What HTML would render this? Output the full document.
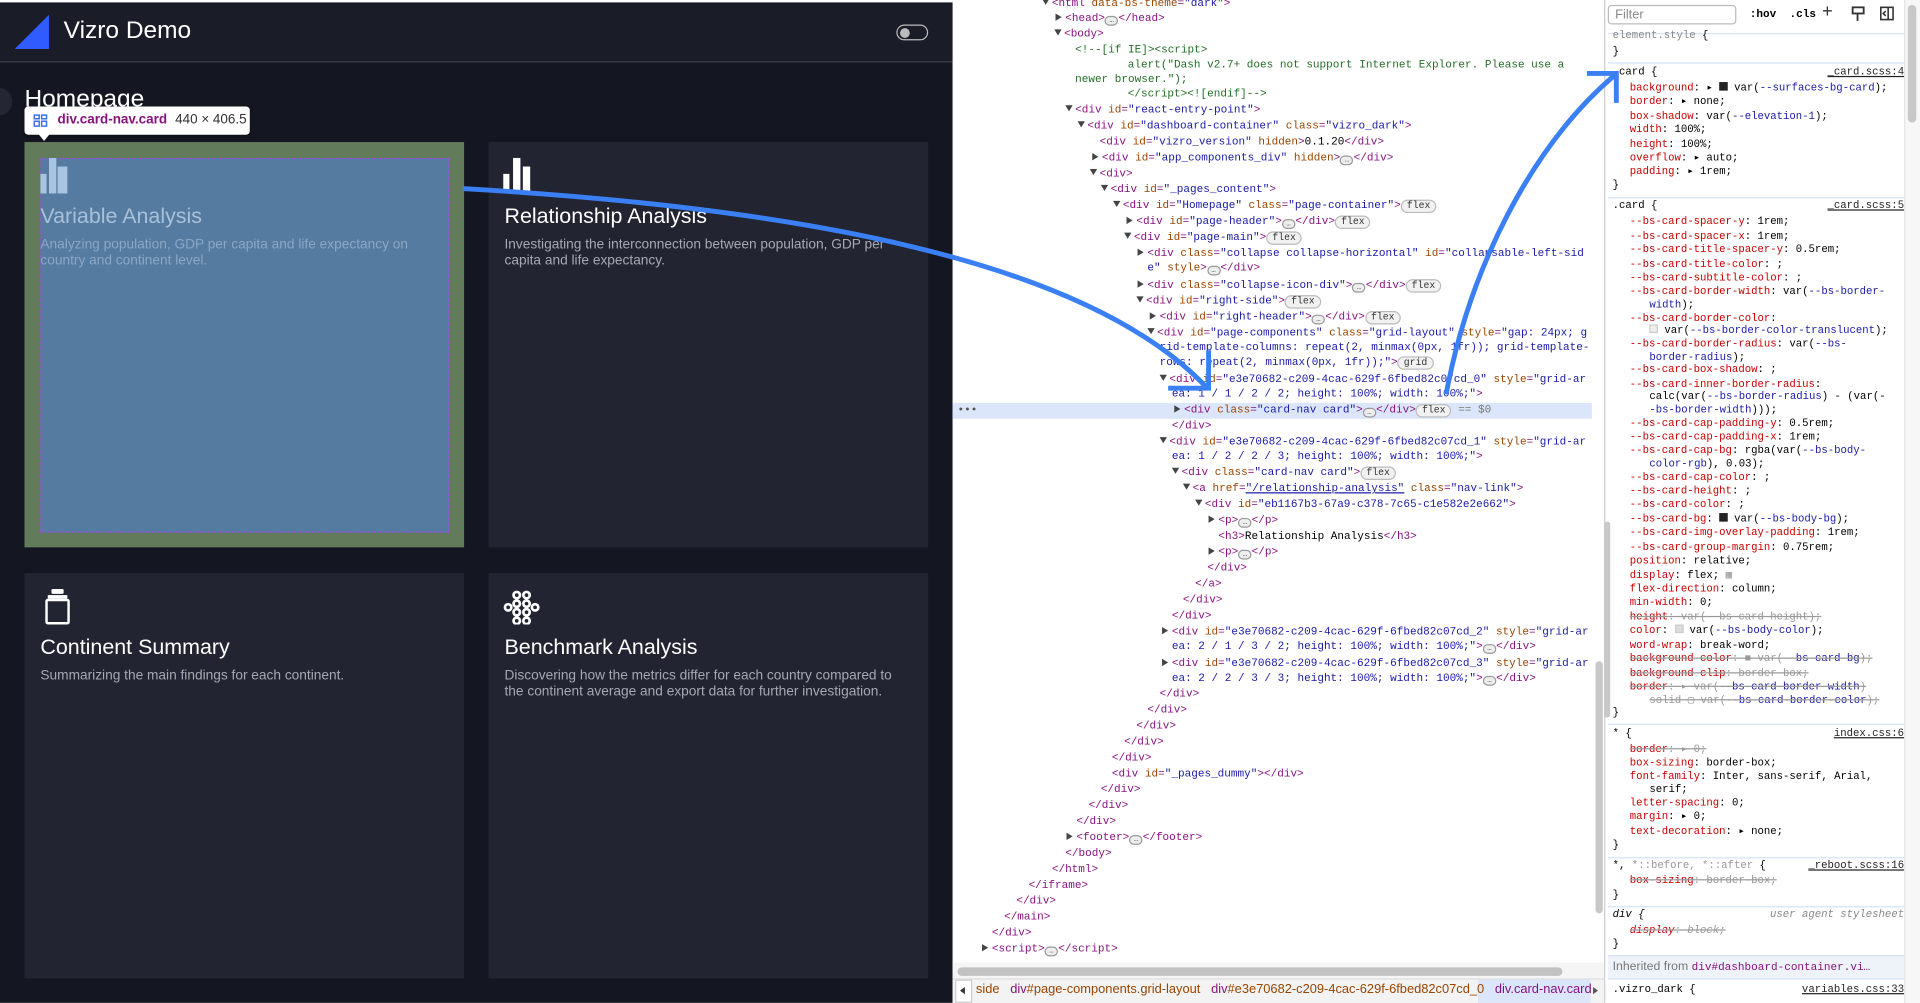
<!DOCTYPE html>
<html><head><meta charset="utf-8">
<style>
*{margin:0;padding:0;box-sizing:border-box}
html,body{width:1920px;height:1003px;overflow:hidden;background:#fff}
#w{position:absolute;left:0;top:0;width:1568px;height:819px;transform:scale(1.22449);transform-origin:0 0;font-family:"Liberation Sans",sans-serif}
.a{position:absolute;white-space:pre}
#left{position:absolute;left:0;top:0;width:778px;height:819px;background:#141721}
#hdr{position:absolute;left:0;top:2px;width:778px;height:49px;background:#1a1c27;border-bottom:1px solid #3a3d4a}
.card{position:absolute;width:359px;height:331px;background:#222432}
.ttl{position:absolute;left:13px;font-size:17.5px;color:#fff}
.dsc{position:absolute;left:13px;width:330px;font-size:11.2px;line-height:13px;color:#a6a8b1}
.m{font-family:"Liberation Mono",monospace;font-size:9px;color:#881280}
.t{color:#881280}.n{color:#994500}.v{color:#1a1aa6}.c{color:#236e25}.k{color:#000}
.s{font-family:"Liberation Mono",monospace;font-size:8.7px;color:#000}
.p{color:#c80000}.b{color:#1a1aa6}
.tri{display:inline-block;width:0;height:0;border-left:5px solid #444;border-top:3px solid transparent;border-bottom:3px solid transparent;margin-right:3px}
.trd{display:inline-block;width:0;height:0;border-top:5px solid #444;border-left:3px solid transparent;border-right:3px solid transparent;margin-right:2px;vertical-align:1px}
.pill{display:inline-block;border:1px solid #bbb;border-radius:6px;font-size:8px;color:#333;padding:0 4px;line-height:9px;background:#f1f1f1}
.dots{display:inline-block;width:11px;height:8px;border:1px solid #999;border-radius:4px;background:#eee;vertical-align:-1px;font-size:6px;line-height:5px;text-align:center;color:#333}
.sep{position:absolute;left:1313px;width:242px;height:1px;background:#d6e3f7}
.fn{position:absolute;right:13px;text-decoration:underline;color:#222}
.st{text-decoration:line-through;color:#999}
</style></head><body><div id="w">

<div id="left">
 <div style="position:absolute;left:0;top:0;width:778px;height:2px;background:#fff"></div>
 <div id="hdr">
  <svg class="a" style="left:12px;top:10px" width="28" height="28"><polygon points="28,0 28,28 0,28" fill="#2f5bff"/></svg>
  <div class="a" style="left:52px;top:12px;font-size:20px;color:#fff">Vizro Demo</div>
  <div class="a" style="left:732px;top:18px;width:26px;height:13px;border:1.5px solid #bbb;border-radius:7px"></div>
  <div class="a" style="left:735px;top:20.5px;width:8px;height:8px;border-radius:50%;background:#bbb"></div>
 </div>
 <div class="a" style="left:-10px;top:72px;width:20px;height:22px;border-radius:50%;background:#242733"></div>
 <div class="a" style="left:20px;top:70px;font-size:20px;color:#fff">Homepage</div>

 <div class="card" style="left:20px;top:116px;background:#627b5a">
  <div class="a" style="left:13px;top:13px;width:334px;height:306px;background:#557ba0;border:1px dashed #9b4fe0"></div>
  <div class="a" style="left:13px;top:26px;width:5px;height:16px;background:#a9c4e0"></div>
  <div class="a" style="left:20px;top:13px;width:6px;height:29px;background:#a9c4e0"></div>
  <div class="a" style="left:27px;top:20px;width:8px;height:22px;background:#a9c4e0"></div>
  <div class="ttl" style="top:50px;color:#a9c0d9">Variable Analysis</div>
  <div class="dsc" style="top:78px;color:#8aa7c6">Analyzing population, GDP per capita and life expectancy on country and continent level.</div>
 </div>
 <div class="card" style="left:399px;top:116px">
  <div class="a" style="left:12px;top:26px;width:5px;height:16px;background:#fff"></div>
  <div class="a" style="left:20px;top:13px;width:6px;height:29px;background:#fff"></div>
  <div class="a" style="left:28px;top:20px;width:6px;height:22px;background:#fff"></div>
  <div class="ttl" style="top:50px">Relationship Analysis</div>
  <div class="dsc" style="top:78px">Investigating the interconnection between population, GDP per capita and life expectancy.</div>
 </div>
 <div class="card" style="left:20px;top:468px">
  <div class="a" style="left:22px;top:13px;width:10px;height:4px;background:#fff;border-radius:1px"></div>
  <div class="a" style="left:19px;top:18px;width:16px;height:3px;background:#fff"></div>
  <div class="a" style="left:17px;top:21px;width:20px;height:21px;border:2.5px solid #fff;border-radius:2px"></div>
  <div class="ttl" style="top:50px">Continent Summary</div>
  <div class="dsc" style="top:78px">Summarizing the main findings for each continent.</div>
 </div>
 <div class="card" style="left:399px;top:468px">
  <svg class="a" style="left:12px;top:14px" width="30" height="28" fill="none" stroke="#fff" stroke-width="2.2">
   <circle cx="11" cy="4" r="2.6"/><circle cx="19" cy="4" r="2.6"/>
   <circle cx="4" cy="14" r="2.6"/><circle cx="11" cy="11" r="2.6"/><circle cx="19" cy="11" r="2.6"/><circle cx="26" cy="14" r="2.6"/>
   <circle cx="11" cy="18" r="2.6"/><circle cx="19" cy="18" r="2.6"/>
   <circle cx="11" cy="25" r="2.6"/><circle cx="19" cy="25" r="2.6"/>
  </svg>
  <div class="ttl" style="top:50px">Benchmark Analysis</div>
  <div class="dsc" style="top:78px">Discovering how the metrics differ for each country compared to the continent average and export data for further investigation.</div>
 </div>

 <div class="a" style="left:20px;top:87px;width:184px;height:23px;background:#fff;border-radius:3px;box-shadow:0 1px 3px rgba(0,0,0,.4)"></div>
 <div class="a" style="left:31px;top:109px;width:0;height:0;border-left:5px solid transparent;border-right:5px solid transparent;border-top:6px solid #fff"></div>
 <svg class="a" style="left:27px;top:93px" width="12" height="11" fill="none" stroke="#3a6fe0" stroke-width="1.2"><rect x="1" y="1" width="4" height="3"/><rect x="7" y="1" width="4" height="3"/><rect x="1" y="6" width="4" height="4"/><rect x="7" y="6" width="4" height="4"/></svg>
 <div class="a" style="left:47px;top:92px;font-size:11px;font-weight:bold;color:#881280">div.card-nav.card</div>
 <div class="a" style="left:143px;top:92px;font-size:11px;color:#333">440 × 406.5</div>
</div>

<!-- elements panel -->
<div class="a" style="left:778px;top:0;width:532px;height:819px;background:#fff"></div>
<div class="a" style="left:778px;top:329px;width:522px;height:13px;background:#dbe6fb"></div>
<div class="a m" style="left:782px;top:330px;color:#555">•••</div>
<div class="a m" style="left:851px;top:-2px"><span class="trd"></span>&lt;html <span class="n">data-bs-theme</span>=<span class="v">"dark"</span>&gt;</div>
<div class="a m" style="left:862px;top:10px"><span class="tri"></span>&lt;head&gt;<span class="dots">…</span>&lt;/head&gt;</div>
<div class="a m" style="left:861px;top:23px"><span class="trd"></span>&lt;body&gt;</div>
<div class="a m c" style="left:878px;top:36px">&lt;!--[if IE]&gt;&lt;script&gt;</div>
<div class="a m c" style="left:921px;top:48px">alert("Dash v2.7+ does not support Internet Explorer. Please use a</div>
<div class="a m c" style="left:878px;top:60px">newer browser.");</div>
<div class="a m c" style="left:921px;top:72px">&lt;/script&gt;&lt;![endif]--&gt;</div>
<div class="a m" style="left:870px;top:85px"><span class="trd"></span>&lt;div <span class="n">id</span>=<span class="v">"react-entry-point"</span>&gt;</div>
<div class="a m" style="left:880px;top:98px"><span class="trd"></span>&lt;div <span class="n">id</span>=<span class="v">"dashboard-container"</span> <span class="n">class</span>=<span class="v">"vizro_dark"</span>&gt;</div>
<div class="a m" style="left:898px;top:111px">&lt;div <span class="n">id</span>=<span class="v">"vizro_version"</span> <span class="n">hidden</span>&gt;<span class="k">0.1.20</span>&lt;/div&gt;</div>
<div class="a m" style="left:892px;top:124px"><span class="tri"></span>&lt;div <span class="n">id</span>=<span class="v">"app_components_div"</span> <span class="n">hidden</span>&gt;<span class="dots">…</span>&lt;/div&gt;</div>
<div class="a m" style="left:890px;top:137px"><span class="trd"></span>&lt;div&gt;</div>
<div class="a m" style="left:899px;top:150px"><span class="trd"></span>&lt;div <span class="n">id</span>=<span class="v">"_pages_content"</span>&gt;</div>
<div class="a m" style="left:909px;top:163px"><span class="trd"></span>&lt;div <span class="n">id</span>=<span class="v">"Homepage"</span> <span class="n">class</span>=<span class="v">"page-container"</span>&gt;<span class="pill">flex</span></div>
<div class="a m" style="left:920px;top:176px"><span class="tri"></span>&lt;div <span class="n">id</span>=<span class="v">"page-header"</span>&gt;<span class="dots">…</span>&lt;/div&gt;<span class="pill">flex</span></div>
<div class="a m" style="left:918px;top:189px"><span class="trd"></span>&lt;div <span class="n">id</span>=<span class="v">"page-main"</span>&gt;<span class="pill">flex</span></div>
<div class="a m" style="left:929px;top:202px"><span class="tri"></span>&lt;div <span class="n">class</span>=<span class="v">"collapse collapse-horizontal"</span> <span class="n">id</span>=<span class="v">"collapsable-left-sid</span></div>
<div class="a m" style="left:937px;top:214px"><span class="v">e"</span> <span class="n">style</span>&gt;<span class="dots">…</span>&lt;/div&gt;</div>
<div class="a m" style="left:929px;top:228px"><span class="tri"></span>&lt;div <span class="n">class</span>=<span class="v">"collapse-icon-div"</span>&gt;<span class="dots">…</span>&lt;/div&gt;<span class="pill">flex</span></div>
<div class="a m" style="left:928px;top:241px"><span class="trd"></span>&lt;div <span class="n">id</span>=<span class="v">"right-side"</span>&gt;<span class="pill">flex</span></div>
<div class="a m" style="left:939px;top:254px"><span class="tri"></span>&lt;div <span class="n">id</span>=<span class="v">"right-header"</span>&gt;<span class="dots">…</span>&lt;/div&gt;<span class="pill">flex</span></div>
<div class="a m" style="left:937px;top:267px"><span class="trd"></span>&lt;div <span class="n">id</span>=<span class="v">"page-components"</span> <span class="n">class</span>=<span class="v">"grid-layout"</span> <span class="n">style</span>=<span class="v">"gap: 24px; g</span></div>
<div class="a m v" style="left:947px;top:279px">rid-template-columns: repeat(2, minmax(0px, 1fr)); grid-template-</div>
<div class="a m" style="left:947px;top:291px"><span class="v">rows: repeat(2, minmax(0px, 1fr));"</span>&gt;<span class="pill">grid</span></div>
<div class="a m" style="left:947px;top:305px"><span class="trd"></span>&lt;div <span class="n">id</span>=<span class="v">"e3e70682-c209-4cac-629f-6fbed82c07cd_0"</span> <span class="n">style</span>=<span class="v">"grid-ar</span></div>
<div class="a m v" style="left:957px;top:317px">ea: 1 / 1 / 2 / 2; height: 100%; width: 100%;"<span class="t">&gt;</span></div>
<div class="a m" style="left:959px;top:330px"><span class="tri"></span>&lt;div <span class="n">class</span>=<span class="v">"card-nav card"</span>&gt;<span class="dots">…</span>&lt;/div&gt;<span class="pill">flex</span> <span style="color:#777">== $0</span></div>
<div class="a m" style="left:957px;top:343px">&lt;/div&gt;</div>
<div class="a m" style="left:947px;top:356px"><span class="trd"></span>&lt;div <span class="n">id</span>=<span class="v">"e3e70682-c209-4cac-629f-6fbed82c07cd_1"</span> <span class="n">style</span>=<span class="v">"grid-ar</span></div>
<div class="a m v" style="left:957px;top:368px">ea: 1 / 2 / 2 / 3; height: 100%; width: 100%;"<span class="t">&gt;</span></div>
<div class="a m" style="left:957px;top:381px"><span class="trd"></span>&lt;div <span class="n">class</span>=<span class="v">"card-nav card"</span>&gt;<span class="pill">flex</span></div>
<div class="a m" style="left:966px;top:394px"><span class="trd"></span>&lt;a <span class="n">href</span>=<span class="v" style="text-decoration:underline;color:#1a1aa6">"/relationship-analysis"</span> <span class="n">class</span>=<span class="v">"nav-link"</span>&gt;</div>
<div class="a m" style="left:976px;top:407px"><span class="trd"></span>&lt;div <span class="n">id</span>=<span class="v">"eb1167b3-67a9-c378-7c65-c1e582e2e662"</span>&gt;</div>
<div class="a m" style="left:987px;top:420px"><span class="tri"></span>&lt;p&gt;<span class="dots">…</span>&lt;/p&gt;</div>
<div class="a m" style="left:995px;top:433px">&lt;h3&gt;<span class="k">Relationship Analysis</span>&lt;/h3&gt;</div>
<div class="a m" style="left:987px;top:446px"><span class="tri"></span>&lt;p&gt;<span class="dots">…</span>&lt;/p&gt;</div>
<div class="a m" style="left:986px;top:459px">&lt;/div&gt;</div>
<div class="a m" style="left:976px;top:472px">&lt;/a&gt;</div>
<div class="a m" style="left:966px;top:485px">&lt;/div&gt;</div>
<div class="a m" style="left:957px;top:498px">&lt;/div&gt;</div>
<div class="a m" style="left:949px;top:511px"><span class="tri"></span>&lt;div <span class="n">id</span>=<span class="v">"e3e70682-c209-4cac-629f-6fbed82c07cd_2"</span> <span class="n">style</span>=<span class="v">"grid-ar</span></div>
<div class="a m" style="left:957px;top:523px"><span class="v">ea: 2 / 1 / 3 / 2; height: 100%; width: 100%;"</span>&gt;<span class="dots">…</span>&lt;/div&gt;</div>
<div class="a m" style="left:949px;top:537px"><span class="tri"></span>&lt;div <span class="n">id</span>=<span class="v">"e3e70682-c209-4cac-629f-6fbed82c07cd_3"</span> <span class="n">style</span>=<span class="v">"grid-ar</span></div>
<div class="a m" style="left:957px;top:549px"><span class="v">ea: 2 / 2 / 3 / 3; height: 100%; width: 100%;"</span>&gt;<span class="dots">…</span>&lt;/div&gt;</div>
<div class="a m" style="left:947px;top:562px">&lt;/div&gt;</div>
<div class="a m" style="left:937px;top:575px">&lt;/div&gt;</div>
<div class="a m" style="left:928px;top:588px">&lt;/div&gt;</div>
<div class="a m" style="left:918px;top:601px">&lt;/div&gt;</div>
<div class="a m" style="left:908px;top:614px">&lt;/div&gt;</div>
<div class="a m" style="left:908px;top:627px">&lt;div <span class="n">id</span>=<span class="v">"_pages_dummy"</span>&gt;&lt;/div&gt;</div>
<div class="a m" style="left:899px;top:640px">&lt;/div&gt;</div>
<div class="a m" style="left:889px;top:653px">&lt;/div&gt;</div>
<div class="a m" style="left:879px;top:666px">&lt;/div&gt;</div>
<div class="a m" style="left:871px;top:679px"><span class="tri"></span>&lt;footer&gt;<span class="dots">…</span>&lt;/footer&gt;</div>
<div class="a m" style="left:870px;top:692px">&lt;/body&gt;</div>
<div class="a m" style="left:859px;top:705px">&lt;/html&gt;</div>
<div class="a m" style="left:840px;top:718px">&lt;/iframe&gt;</div>
<div class="a m" style="left:830px;top:731px">&lt;/div&gt;</div>
<div class="a m" style="left:820px;top:744px">&lt;/main&gt;</div>
<div class="a m" style="left:810px;top:757px">&lt;/div&gt;</div>
<div class="a m" style="left:802px;top:770px"><span class="tri"></span>&lt;script&gt;<span class="dots">…</span>&lt;/script&gt;</div>
<div class="a" style="left:1303px;top:540px;width:6px;height:206px;border-radius:3px;background:#c8c8c8"></div>
<div class="a" style="left:778px;top:786px;width:532px;height:13px;background:#f5f5f5"></div>
<div class="a" style="left:782px;top:790px;width:494px;height:7px;border-radius:4px;background:#c2c2c2"></div>
<div class="a" style="left:778px;top:799px;width:532px;height:20px;background:#f3f3f3;border-top:1px solid #ddd"></div>
<div class="a" style="left:780px;top:800px;width:14px;height:19px;background:#fff;border:1px solid #ccc"></div>
<div class="a" style="left:784px;top:806px;width:0;height:0;border-right:4px solid #333;border-top:3.5px solid transparent;border-bottom:3.5px solid transparent"></div>
<div class="a" style="left:1207px;top:800px;width:92px;height:19px;background:#dbe6fb"></div>
<div class="a" style="left:797px;top:802px;font-size:10.5px;color:#881280"><span style="color:#994500">side</span>   div<span style="color:#994500">#page-components.grid-layout</span>   div<span style="color:#994500">#e3e70682-c209-4cac-629f-6fbed82c07cd_0</span>   div.card-nav.card</div>
<div class="a" style="left:1301px;top:806px;width:0;height:0;border-left:4px solid #555;border-top:3.5px solid transparent;border-bottom:3.5px solid transparent"></div>

<!-- styles pane -->
<div class="a" style="left:1310px;top:0;width:258px;height:819px;background:#fff;border-left:1px solid #ccc"></div>
<div class="a" style="left:1557px;top:4px;width:8px;height:117px;border-radius:4px;background:#c8c8c8"></div>
<div class="a" style="left:1310px;top:426px;width:5px;height:160px;border-radius:3px;background:#c8c8c8"></div>
<div class="a" style="left:1313px;top:4px;width:105px;height:16px;border:1px solid #bbb;border-radius:3px"></div>
<div class="a" style="left:1319px;top:6px;font-size:10.5px;color:#888">Filter</div>
<div class="a s" style="left:1429px;top:7px;font-weight:bold;font-size:9px">:hov  .cls</div>
<div class="a" style="left:1488px;top:1px;font-size:15px;color:#333">+</div>
<svg class="a" style="left:1512px;top:5px" width="12" height="13" fill="none" stroke="#333" stroke-width="1.5"><rect x="1" y="1" width="9" height="5"/><path d="M5 6v6"/></svg>
<svg class="a" style="left:1535px;top:5px" width="12" height="12" fill="none" stroke="#333" stroke-width="1.3"><rect x="1" y="1" width="10" height="10"/><path d="M7 1v10M5 4l-2 2 2 2"/></svg>
<div class="sep" style="top:27px"></div>
<div class="a s" style="left:1317px;top:24px;color:#888">element.style <span class="k">{</span></div>
<div class="a s" style="left:1317px;top:37px">}</div>
<div class="sep" style="top:51px"></div>
<div class="a s" style="left:1317px;top:54px">.card {</div><div class="a s fn" style="top:54px">_card.scss:4</div>
<div class="a s" style="left:1331px;top:67px"><span class="p">background</span>: ▸ <span style="display:inline-block;width:7px;height:7px;background:#222"></span> var(<span class="b">--surfaces-bg-card</span>);</div>
<div class="a s" style="left:1331px;top:78px"><span class="p">border</span>: ▸ none;</div>
<div class="a s" style="left:1331px;top:90px"><span class="p">box-shadow</span>: var(<span class="b">--elevation-1</span>);</div>
<div class="a s" style="left:1331px;top:101px"><span class="p">width</span>: 100%;</div>
<div class="a s" style="left:1331px;top:113px"><span class="p">height</span>: 100%;</div>
<div class="a s" style="left:1331px;top:124px"><span class="p">overflow</span>: ▸ auto;</div>
<div class="a s" style="left:1331px;top:135px"><span class="p">padding</span>: ▸ 1rem;</div>
<div class="a s" style="left:1317px;top:146px">}</div>
<div class="sep" style="top:161px"></div>
<div class="a s" style="left:1317px;top:163px">.card {</div><div class="a s fn" style="top:163px">_card.scss:5</div>
<div class="a s" style="left:1331px;top:176px"><span class="p">--bs-card-spacer-y</span>: 1rem;</div>
<div class="a s" style="left:1331px;top:188px"><span class="p">--bs-card-spacer-x</span>: 1rem;</div>
<div class="a s" style="left:1331px;top:199px"><span class="p">--bs-card-title-spacer-y</span>: 0.5rem;</div>
<div class="a s" style="left:1331px;top:211px"><span class="p">--bs-card-title-color</span>: ;</div>
<div class="a s" style="left:1331px;top:222px"><span class="p">--bs-card-subtitle-color</span>: ;</div>
<div class="a s" style="left:1331px;top:233px"><span class="p">--bs-card-border-width</span>: var(<span class="b">--bs-border-</span></div>
<div class="a s" style="left:1347px;top:244px"><span class="b">width</span>);</div>
<div class="a s" style="left:1331px;top:255px"><span class="p">--bs-card-border-color</span>:</div>
<div class="a s" style="left:1347px;top:265px"><span style="display:inline-block;width:7px;height:7px;border:1px solid #ccc;background:#eee"></span> var(<span class="b">--bs-border-color-translucent</span>);</div>
<div class="a s" style="left:1331px;top:276px"><span class="p">--bs-card-border-radius</span>: var(<span class="b">--bs-</span></div>
<div class="a s" style="left:1347px;top:287px"><span class="b">border-radius</span>);</div>
<div class="a s" style="left:1331px;top:297px"><span class="p">--bs-card-box-shadow</span>: ;</div>
<div class="a s" style="left:1331px;top:309px"><span class="p">--bs-card-inner-border-radius</span>:</div>
<div class="a s" style="left:1347px;top:319px">calc(var(<span class="b">--bs-border-radius</span>) - (var(-</div>
<div class="a s" style="left:1347px;top:330px"><span class="b">-bs-border-width</span>)));</div>
<div class="a s" style="left:1331px;top:341px"><span class="p">--bs-card-cap-padding-y</span>: 0.5rem;</div>
<div class="a s" style="left:1331px;top:352px"><span class="p">--bs-card-cap-padding-x</span>: 1rem;</div>
<div class="a s" style="left:1331px;top:363px"><span class="p">--bs-card-cap-bg</span>: rgba(var(<span class="b">--bs-body-</span></div>
<div class="a s" style="left:1347px;top:374px"><span class="b">color-rgb</span>), 0.03);</div>
<div class="a s" style="left:1331px;top:385px"><span class="p">--bs-card-cap-color</span>: ;</div>
<div class="a s" style="left:1331px;top:396px"><span class="p">--bs-card-height</span>: ;</div>
<div class="a s" style="left:1331px;top:407px"><span class="p">--bs-card-color</span>: ;</div>
<div class="a s" style="left:1331px;top:419px"><span class="p">--bs-card-bg</span>: <span style="display:inline-block;width:7px;height:7px;background:#222"></span> var(<span class="b">--bs-body-bg</span>);</div>
<div class="a s" style="left:1331px;top:430px"><span class="p">--bs-card-img-overlay-padding</span>: 1rem;</div>
<div class="a s" style="left:1331px;top:442px"><span class="p">--bs-card-group-margin</span>: 0.75rem;</div>
<div class="a s" style="left:1331px;top:453px"><span class="p">position</span>: relative;</div>
<div class="a s" style="left:1331px;top:465px"><span class="p">display</span>: flex; <span style="color:#999">▦</span></div>
<div class="a s" style="left:1331px;top:476px"><span class="p">flex-direction</span>: column;</div>
<div class="a s" style="left:1331px;top:487px"><span class="p">min-width</span>: 0;</div>
<div class="a s st" style="left:1331px;top:499px"><span class="p">height</span>: var(--bs-card-height);</div>
<div class="a s" style="left:1331px;top:510px"><span class="p">color</span>: <span style="display:inline-block;width:7px;height:7px;border:1px solid #ccc;background:#ddd"></span> var(<span class="b">--bs-body-color</span>);</div>
<div class="a s" style="left:1331px;top:522px"><span class="p">word-wrap</span>: break-word;</div>
<div class="a s st" style="left:1331px;top:533px"><span class="p">background-color</span>: ■ var(<span class="b">--bs-card-bg</span>);</div>
<div class="a s st" style="left:1331px;top:545px"><span class="p">background-clip</span>: border-box;</div>
<div class="a s st" style="left:1331px;top:556px"><span class="p">border</span>: ▸ var(<span class="b">--bs-card-border-width</span>)</div>
<div class="a s st" style="left:1347px;top:567px">solid ▢ var(<span class="b">--bs-card-border-color</span>);</div>
<div class="a s" style="left:1317px;top:577px">}</div>
<div class="sep" style="top:591px"></div>
<div class="a s" style="left:1317px;top:594px">* {</div><div class="a s fn" style="top:594px">index.css:6</div>
<div class="a s st" style="left:1331px;top:607px"><span class="p">border</span>: ▸ 0;</div>
<div class="a s" style="left:1331px;top:618px"><span class="p">box-sizing</span>: border-box;</div>
<div class="a s" style="left:1331px;top:629px"><span class="p">font-family</span>: Inter, sans-serif, Arial,</div>
<div class="a s" style="left:1347px;top:640px">serif;</div>
<div class="a s" style="left:1331px;top:651px"><span class="p">letter-spacing</span>: 0;</div>
<div class="a s" style="left:1331px;top:662px"><span class="p">margin</span>: ▸ 0;</div>
<div class="a s" style="left:1331px;top:674px"><span class="p">text-decoration</span>: ▸ none;</div>
<div class="a s" style="left:1317px;top:685px">}</div>
<div class="sep" style="top:700px"></div>
<div class="a s" style="left:1317px;top:702px">*, <span style="color:#999">*::before, *::after</span> {</div><div class="a s fn" style="top:702px">_reboot.scss:16</div>
<div class="a s st" style="left:1331px;top:714px"><span class="p">box-sizing</span>: border-box;</div>
<div class="a s" style="left:1317px;top:726px">}</div>
<div class="sep" style="top:740px"></div>
<div class="a s" style="left:1317px;top:742px;font-style:italic">div {</div><div class="a s" style="right:13px;top:742px;font-style:italic;color:#888">user agent stylesheet</div>
<div class="a s st" style="left:1331px;top:755px;font-style:italic"><span class="p">display</span>: block;</div>
<div class="a s" style="left:1317px;top:766px">}</div>
<div class="a" style="left:1313px;top:780px;width:242px;height:20px;background:#eef2f9;border-top:1px solid #d6e3f7;border-bottom:1px solid #d6e3f7"></div>
<div class="a" style="left:1317px;top:784px;font-size:10px;color:#777">Inherited from <span style="font-family:'Liberation Mono',monospace;font-size:9px;color:#881280">div#dashboard-container.vi…</span></div>
<div class="a s" style="left:1317px;top:803px">.vizro_dark {</div><div class="a s fn" style="top:803px">variables.css:33</div>
<div class="a" style="left:1555px;top:0;width:13px;height:819px;background:#f7f7f7;border-left:1px solid #e5e5e5"></div>
<div class="a" style="left:1558px;top:4px;width:7px;height:96px;border-radius:4px;background:#c8c8c8"></div>

<!-- arrows -->
<svg class="a" style="left:0;top:0" width="1568" height="819" fill="none" stroke="#3a80f4" stroke-width="4" stroke-linecap="butt">
 <path d="M378 154 C 620 168, 880 205, 985 316"/>
 <path d="M954 317 H 987 V 286"/>
 <path d="M1181 322 C 1200 220, 1250 120, 1318 62"/>
 <path d="M1296 60 H 1320 V 84"/>
</svg>
</div></body></html>
